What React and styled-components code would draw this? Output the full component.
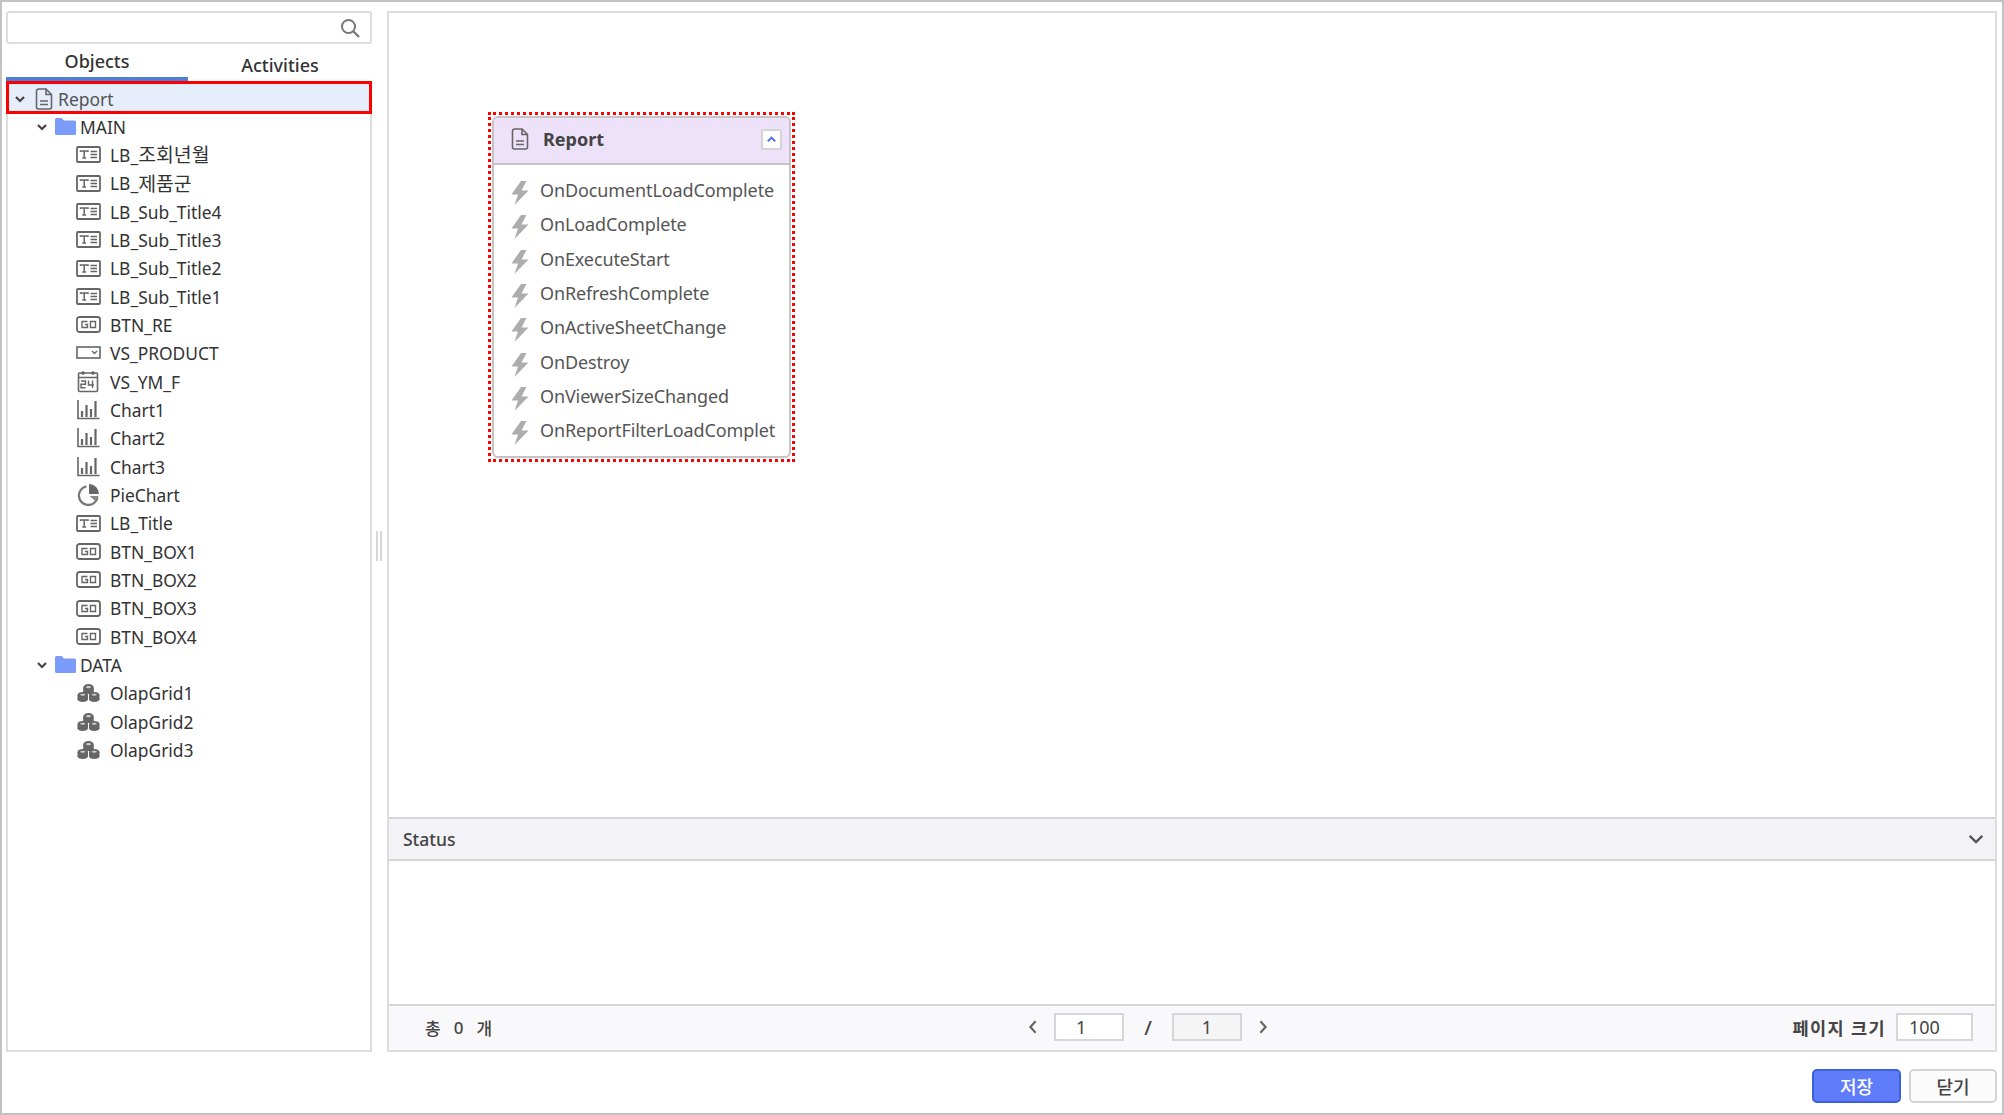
import React from "react";
import styled, { createGlobalStyle } from "styled-components";

const Global = createGlobalStyle`
  html, body { margin: 0; padding: 0; background: #fff; }
  body { font-family: "Noto Sans", "Noto Sans CJK KR", sans-serif; color: #333; }
  * { box-sizing: border-box; }
`;

const Window = styled.div`
  width: 2004px; height: 1115px; overflow: hidden; background: #fff;
  border: 2px solid #c2c2c2;
  display: flex; flex-direction: column;
  padding: 9px 5px 10px 4px;
`;
const Main = styled.div`display: flex; height: 1041px;`;
const Side = styled.div`width: 366px; flex: none; display: flex; flex-direction: column;`;
const Search = styled.div`
  height: 33px; border: 2px solid #dcdcdc; border-radius: 3px;
  display: flex; align-items: center; justify-content: flex-end; padding-right: 10px; flex: none;
`;
const Tabs = styled.div`display: flex; height: 37px; flex: none;`;
const Tab = styled.div`
  width: ${p => p.$w}px; height: 37px; text-align: center; font-size: 18px; font-weight: 500;
  line-height: ${p => (p.$active ? "35px" : "42px")}; color: #333;
  border-bottom: 4px solid ${p => (p.$active ? "#4a7fdc" : "transparent")};
`;
const TreePanel = styled.div`
  flex: 1; border: 2px solid #dcdcdc; border-top: 0;
  display: flex; flex-direction: column;
`;
const ReportRow = styled.div`
  height: 33px; margin: 0 -2px; border: 3px solid #f00; background: #e6edfb;
  display: flex; align-items: center; padding: 2px 0 0 4px; font-size: 17.5px; color: #555; flex: none;
`;
const Rows = styled.div`margin-top: -1.5px;`;
const Row = styled.div`
  height: 28.33px; display: flex; align-items: center; font-size: 17.4px; color: #333;
  white-space: nowrap; padding-left: ${p => p.$indent}px;
`;
const Hangul = styled.span`font-size: 19.4px; line-height: 1;`;
const IconSlot = styled.span`
  width: ${p => p.$w}px; flex: none; display: flex; align-items: center; justify-content: flex-start;
  & > svg { display: block; }
`;
const Gutter = styled.div`
  width: 15px; flex: none; display: flex; align-items: center; justify-content: center; padding: 28px 2px 0 0;
`;
const Grip = styled.div`
  width: 6px; height: 30px; border-left: 2px solid #d8d8d8; border-right: 2px solid #d8d8d8;
`;
const Content = styled.div`
  flex: 1; min-width: 0; border: 2px solid #dcdcdc; display: flex; flex-direction: column;
`;
const Canvas = styled.div`position: relative; height: 804px; flex: none;`;
const Selection = styled.div`
  position: absolute; left: 99px; top: 99px; width: 307px; height: 350px;
  border: 3px dotted #f00; padding: 1px;
`;
const Card = styled.div`
  height: 100%; border: 2px solid #c4c4c4; border-radius: 6px; background: #fff; overflow: hidden;
`;
const CardHead = styled.div`
  height: 47px; background: #eee2fa; border-bottom: 2px solid #c4c4c4;
  display: flex; align-items: center; padding: 0 7px 3px 16px;
`;
const CardTitle = styled.div`font-size: 18px; font-weight: 700; color: #444; flex: 1; margin-left: 13px;`;
const Collapse = styled.div`
  width: 21px; height: 21px; border: 2px solid #d4d4d4; background: #fff; border-radius: 2px;
  display: flex; align-items: center; justify-content: center;
`;
const Events = styled.div`padding-top: 8px;`;
const EventRow = styled.div`
  height: 34.3px; display: flex; align-items: center; padding-left: 17px;
  font-size: 18px; color: #555; white-space: nowrap;
`;
const BoltSlot = styled.span`display: flex; padding-top: 6px;`;
const EventLabel = styled.span`margin-left: 11px; letter-spacing: -0.12px;`;
const StatusHead = styled.div`
  height: 44px; flex: none; background: #f2f2f7;
  border-top: 2px solid #d6d6d6; border-bottom: 2px solid #d6d6d6;
  display: flex; align-items: center; justify-content: space-between; padding: 0 8px 0 14px;
  font-size: 17.5px; font-weight: 500; color: #444;
`;
const StatusBody = styled.div`flex: 1;`;
const Footer = styled.div`
  height: 46px; flex: none; background: #f9f9fb; border-top: 2px solid #d6d6d6;
  display: flex; align-items: center; padding: 0 22px 2px 36px;
  font-size: 17px; font-weight: 500; color: #444;
`;
const Total = styled.div`display: flex; gap: 13px; align-items: center; width: 599px;`;
const Pager = styled.div`display: flex; align-items: center;`;
const PageBox = styled.div`
  width: ${p => p.$w}px; height: 28px; border: 2px solid #d6d6d6; background: ${p => (p.$muted ? "#f5f5f5" : "#fff")};
  display: flex; align-items: center; justify-content: ${p => (p.$muted ? "center" : "flex-start")};
  padding-left: ${p => p.$pad}px; font-size: 18px; font-weight: 400; color: #444;
`;
const Slash = styled.span`width: 48px; text-align: center; font-size: 20px;`;
const Arrow = styled.span`
  width: ${p => p.$w}px; display: flex; justify-content: ${p => p.$end ? "flex-end" : "flex-start"};
`;
const SizeGroup = styled.div`display: flex; align-items: center; gap: 10px; margin-left: auto;`;
const SizeLabel = styled.span`font-size: 17.5px; font-weight: 700; letter-spacing: 1.4px;`;
const Actions = styled.div`
  flex: 1; display: flex; justify-content: flex-end; align-items: flex-end; gap: 8px;
`;
const Btn = styled.div`
  width: ${p => (p.$primary ? 89 : 88)}px; height: 34px; border-radius: 5px; display: flex; align-items: center; justify-content: center;
  font-size: 18px; font-weight: 500;
  background: ${p => (p.$primary ? "#5f7dfa" : "#fbfbfb")};
  color: ${p => (p.$primary ? "#fff" : "#444")};
  border: 2px solid ${p => (p.$primary ? "#3c5fdc" : "#d4d4d4")};
`;

const Chevron = ({ size = 14, color = "#444", dir = "down", sw = 2.2 }) => {
  const d = { down: "M3 5l4 4 4-4", up: "M3 9l4-4 4 4", left: "M9 2.5L5 7l4 4.5", right: "M5 2.5L9 7l-4 4.5" }[dir];
  return (
    <svg width={size} height={size} viewBox="0 0 14 14" fill="none" stroke={color} strokeWidth={sw}>
      <path d={d} />
    </svg>
  );
};
const DocIcon = ({ c = "#666" }) => (
  <svg width="20" height="22" viewBox="0 0 20 22" fill="none" stroke={c} strokeWidth="1.6">
    <path d="M2.5 3a2 2 0 0 1 2-2h7.5l5.5 5.5V19a2 2 0 0 1-2 2h-11a2 2 0 0 1-2-2z" />
    <path d="M12 1v5.5h5.5M6 13h8M6 16.5h8" />
  </svg>
);
const FolderIcon = () => (
  <svg width="21" height="17" viewBox="0 0 21 17">
    <path d="M0 1.5A1.5 1.5 0 0 1 1.5 0h5L9 2.5h10.5A1.5 1.5 0 0 1 21 4v11.5a1.5 1.5 0 0 1-1.5 1.5h-18A1.5 1.5 0 0 1 0 15.5z" fill="#7b9bfa" />
  </svg>
);
const LabelIcon = () => (
  <svg width="25" height="17" viewBox="0 0 25 17" fill="none" stroke="#666">
    <rect x="1" y="1" width="23" height="15" rx="1" strokeWidth="1.8" />
    <path d="M4.5 6V5h7.5v1M8.2 5v7M6.3 12h3.8M14.5 5.5h6.5M14.5 8.5h6.5M14.5 11.5h6.5" strokeWidth="1.5" />
  </svg>
);
const GoIcon = () => (
  <svg width="25" height="17" viewBox="0 0 25 17" fill="none" stroke="#666">
    <rect x="1" y="1" width="23" height="15" rx="2.5" strokeWidth="1.8" />
    <path d="M11.5 5.5H6v6h5.5V8.5H9M14.5 5.5h5v6h-5z" strokeWidth="1.4" />
  </svg>
);
const ComboIcon = () => (
  <svg width="25" height="14" viewBox="0 0 25 14" fill="none" stroke="#666">
    <rect x="1" y="1" width="23" height="11" strokeWidth="1.6" />
    <path d="M16 5l2.5 2.5L21 5" strokeWidth="1.4" />
  </svg>
);
const CalIcon = () => (
  <svg width="22" height="23" viewBox="0 0 22 23" fill="none" stroke="#666" style={{ marginLeft: 1 }}>
    <rect x="1.5" y="3" width="19" height="18.5" rx="1" strokeWidth="1.6" />
    <path d="M1.5 7.5h19" strokeWidth="1.5" />
    <circle cx="6" cy="3" r="1.5" fill="#666" strokeWidth="0.5" />
    <circle cx="16" cy="3" r="1.5" fill="#666" strokeWidth="0.5" />
    <path d="M4 11h4.5v3.2H4v3.6h4.5M11.5 10.5V15h5.5M15.5 10.5v7.5" strokeWidth="1.4" />
  </svg>
);
const ChartIcon = () => (
  <svg width="23" height="20" viewBox="0 0 23 20" fill="none" stroke="#666" strokeWidth="2.2" style={{ marginLeft: 1 }}>
    <path d="M1 0v18.5h21.5" strokeWidth="1.6" />
    <path d="M5 17v-6M9.5 17V5M14 17V9M18.5 17V1" />
  </svg>
);
const PieIcon = () => (
  <svg width="23" height="23" viewBox="0 0 22 22" style={{ marginLeft: 1 }}>
    <path d="M9 3.2A9 9 0 1 0 19.6 14" fill="none" stroke="#777" strokeWidth="2.2" />
    <path d="M11.5 1a9.5 9.5 0 0 1 9.5 9.5h-9.5z" fill="#666" />
    <path d="M12 12.5h8.6a8 8 0 0 1-3 4.8z" fill="#888" />
  </svg>
);
const OlapIcon = () => (
  <svg width="23" height="20" viewBox="0 0 22 18" style={{ marginLeft: 1 }}>
    <g fill="#666">
      <ellipse cx="11" cy="4" rx="5" ry="3.6" />
      <rect x="6" y="4" width="10" height="4" />
      <ellipse cx="11" cy="8" rx="5" ry="2" />
      <ellipse cx="5.5" cy="11" rx="5" ry="3" />
      <rect x="0.5" y="11" width="10" height="4" />
      <ellipse cx="5.5" cy="15" rx="5" ry="2.6" />
      <ellipse cx="16.5" cy="11" rx="5" ry="3" />
      <rect x="11.5" y="11" width="10" height="4" />
      <ellipse cx="16.5" cy="15" rx="5" ry="2.6" />
    </g>
    <g fill="#ccc">
      <ellipse cx="11" cy="3.4" rx="2.4" ry="1" />
      <ellipse cx="5.5" cy="10.6" rx="2.4" ry="1" />
      <ellipse cx="16.5" cy="10.6" rx="2.4" ry="1" />
    </g>
  </svg>
);
const Bolt = () => (
  <svg width="18" height="24" viewBox="0 0 18 24">
    <path d="M10 0L0.5 13.5H7L3.5 24 17.5 9.5H10.5L15.5 0z" fill="#adadad" />
  </svg>
);
const SearchIcon = () => (
  <svg width="20" height="20" viewBox="0 0 20 20" fill="none" stroke="#777" strokeWidth="2">
    <circle cx="8.5" cy="8.5" r="6.5" />
    <path d="M13.5 13.5L19 19" strokeWidth="2.4" />
  </svg>
);

const icons = { label: LabelIcon, go: GoIcon, combo: ComboIcon, cal: CalIcon, chart: ChartIcon, pie: PieIcon, olap: OlapIcon };
const mainItems = [
  ["label", "LB_", "조회년월"], ["label", "LB_", "제품군"], ["label", "LB_Sub_Title4"], ["label", "LB_Sub_Title3"],
  ["label", "LB_Sub_Title2"], ["label", "LB_Sub_Title1"], ["go", "BTN_RE"], ["combo", "VS_PRODUCT"],
  ["cal", "VS_YM_F"], ["chart", "Chart1"], ["chart", "Chart2"], ["chart", "Chart3"], ["pie", "PieChart"],
  ["label", "LB_Title"], ["go", "BTN_BOX1"], ["go", "BTN_BOX2"], ["go", "BTN_BOX3"], ["go", "BTN_BOX4"],
];
const dataItems = [["olap", "OlapGrid1"], ["olap", "OlapGrid2"], ["olap", "OlapGrid3"]];
const events = [
  "OnDocumentLoadComplete", "OnLoadComplete", "OnExecuteStart", "OnRefreshComplete",
  "OnActiveSheetChange", "OnDestroy", "OnViewerSizeChanged", "OnReportFilterLoadComplet",
];

const Leaf = ({ kind, text, hangul }) => {
  const I = icons[kind];
  return (
    <Row $indent={68}>
      <IconSlot $w={34}><I /></IconSlot>
      {text}
      {hangul && <Hangul>{hangul}</Hangul>}
    </Row>
  );
};
const FolderRow = ({ text }) => (
  <Row $indent={27}>
    <IconSlot $w={20}><Chevron /></IconSlot>
    <IconSlot $w={25}><FolderIcon /></IconSlot>
    {text}
  </Row>
);

export default function App() {
  return (
    <Window>
      <Global />
      <Main>
        <Side>
          <Search><SearchIcon /></Search>
          <Tabs>
            <Tab $active $w={182}>Objects</Tab>
            <Tab $w={184}>Activities</Tab>
          </Tabs>
          <TreePanel>
            <ReportRow>
              <IconSlot $w={21}><Chevron /></IconSlot>
              <IconSlot $w={24}><DocIcon /></IconSlot>
              Report
            </ReportRow>
            <Rows>
              <FolderRow text="MAIN" />
              {mainItems.map(([k, t, h]) => <Leaf key={t + (h || "")} kind={k} text={t} hangul={h} />)}
              <FolderRow text="DATA" />
              {dataItems.map(([k, t]) => <Leaf key={t} kind={k} text={t} />)}
            </Rows>
          </TreePanel>
        </Side>
        <Gutter><Grip /></Gutter>
        <Content>
          <Canvas>
            <Selection>
              <Card>
                <CardHead>
                  <DocIcon />
                  <CardTitle>Report</CardTitle>
                  <Collapse><Chevron size={13} color="#4a6cf0" dir="up" /></Collapse>
                </CardHead>
                <Events>
                  {events.map(e => (
                    <EventRow key={e}><BoltSlot><Bolt /></BoltSlot><EventLabel>{e}</EventLabel></EventRow>
                  ))}
                </Events>
              </Card>
            </Selection>
          </Canvas>
          <StatusHead>
            Status
            <Chevron size={22} dir="down" color="#555" sw={1.5} />
          </StatusHead>
          <StatusBody />
          <Footer>
            <Total><span>총</span><span>0</span><span>개</span></Total>
            <Pager>
              <Arrow $w={30}><Chevron size={18} dir="left" color="#666" sw={1.7} /></Arrow>
              <PageBox $w={70} $pad={20}>1</PageBox>
              <Slash>/</Slash>
              <PageBox $w={70} $muted>1</PageBox>
              <Arrow $w={30} $end><Chevron size={18} dir="right" color="#666" sw={1.7} /></Arrow>
            </Pager>
            <SizeGroup>
              <SizeLabel>페이지 크기</SizeLabel>
              <PageBox $w={77} $pad={11}>100</PageBox>
            </SizeGroup>
          </Footer>
        </Content>
      </Main>
      <Actions>
        <Btn $primary>저장</Btn>
        <Btn>닫기</Btn>
      </Actions>
    </Window>
  );
}
